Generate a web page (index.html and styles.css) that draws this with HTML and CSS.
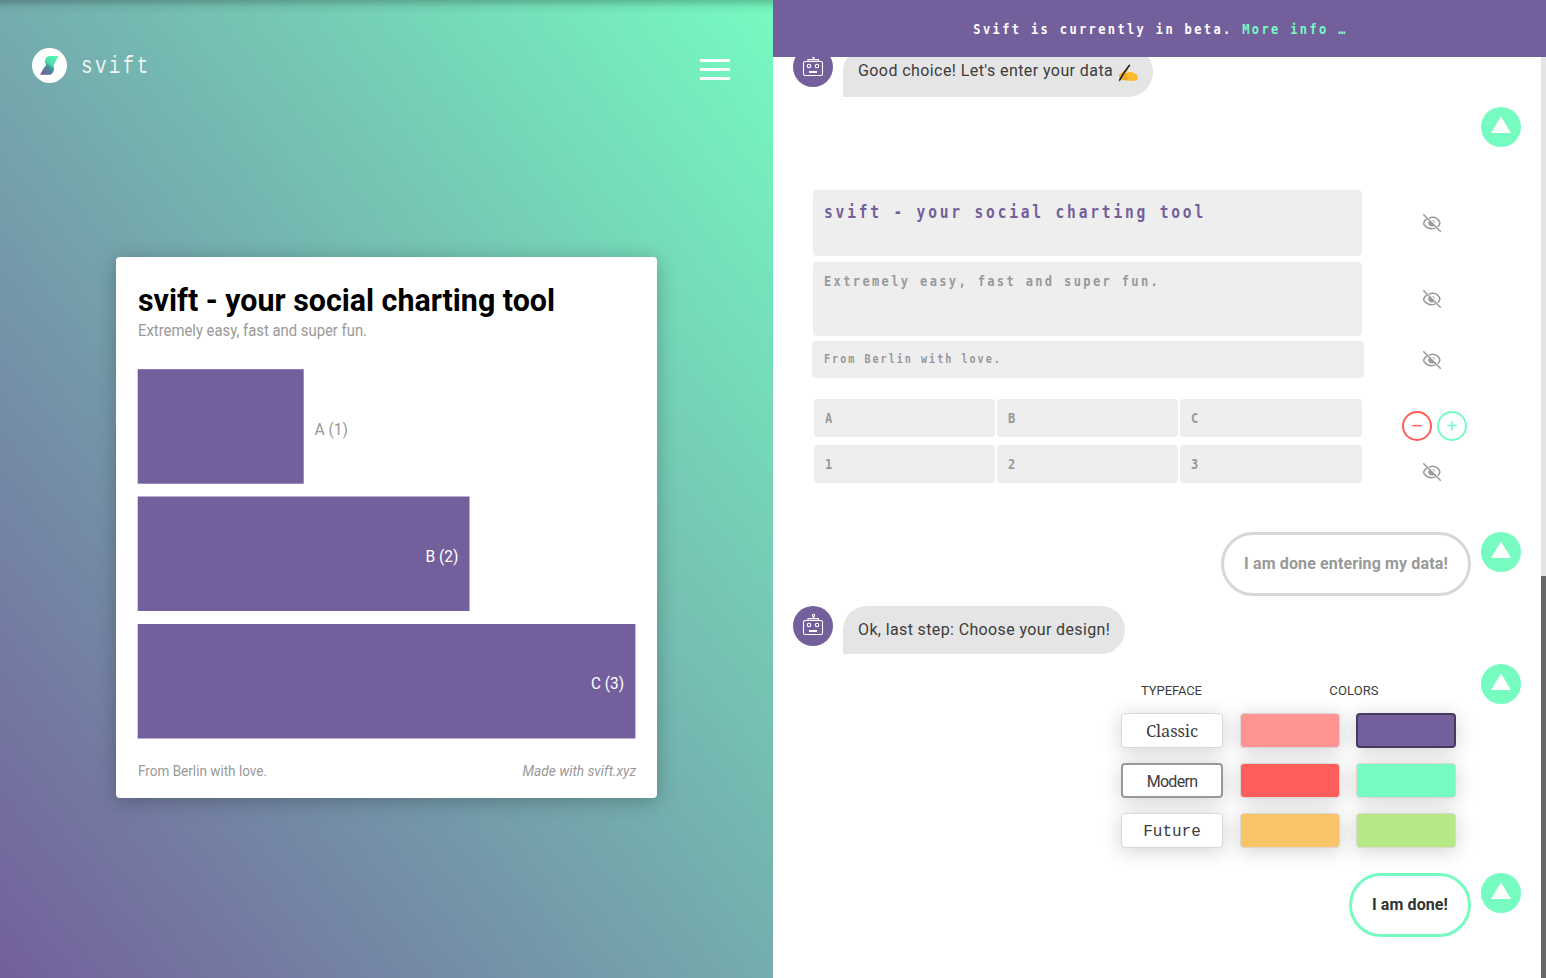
FILE: index.html
```html
<!DOCTYPE html>
<html lang="en">
<head>
<meta charset="utf-8">
<title>svift</title>
<link rel="stylesheet" href="styles.css">
</head>
<body>
<svg width="0" height="0" class="defs">
  <defs>
    <symbol id="hidden" viewBox="0 0 20 20">
      <g fill="none" stroke="#999" stroke-width="1.5" stroke-linecap="round">
        <path d="M1.700 1.700 18.300 18.300"/>
        <path d="M7.700 4.700C11 3.800 15 4.800 17.200 8c.9 1.300.9 2.600 0 4l-1 1.200M4.400 6.300C1.400 8.600 1 10.700 2.700 12.600c2.800 3.100 6.600 3.700 10.100 2.500"/>
      </g>
      <path d="M7.300 7.700a3.300 3.300 0 0 0 4.800 4.700z" fill="#999"/>
      <path d="M10.300 7.200q2.200.4 2.300 2.500" fill="none" stroke="#aaa"/>
    </symbol>
    <symbol id="robot" viewBox="0 0 40 40">
      <g fill="none" stroke="#fff" stroke-width="1.100">
        <rect x="10.500" y="14.500" width="19" height="14" rx="1.500"/>
        <path d="M15 14.300v-1.700h10.500v1.700M20.500 12.500v-2"/>
        <circle cx="20.500" cy="9.500" r="1.100"/>
        <circle cx="16" cy="19" r="1.700"/>
        <circle cx="24" cy="19" r="1.700"/>
      </g>
      <path d="M16 24h8v2h-8z" fill="#fff"/>
    </symbol>
    <linearGradient id="mark" x1=".8" y1="0" x2=".2" y2="1">
      <stop offset="0" stop-color="#55f5b0"/><stop offset=".42" stop-color="#50dcae"/>
      <stop offset=".55" stop-color="#44999b"/><stop offset="1" stop-color="#735f9b"/>
    </linearGradient>
  </defs>
</svg>
<div class="app">
  <section class="stage">
    <header class="header">
      <svg class="logo" width="120" height="35" viewBox="0 0 120 35">
        <circle cx="17.500" cy="17.500" r="17.500" fill="#fff"/>
        <path d="M26.500 8 22.800 15Q20.800 17 21.800 19Q23 24 18.500 26.800H8L12.200 19.200Q15.200 17.300 13.200 15Q12 9.500 17 8Z" fill="url(#mark)"/>
        <text transform="translate(49 24.500) scale(.8 1)" textLength="84" class="wordmark">svift</text>
      </svg>
      <div class="menu"><i></i><i></i><i></i></div>
    </header>
    <div class="card">
      <svg width="541" height="541" viewBox="0 0 541 541" class="chart">
        <text x="22" y="54" class="chart-title" textLength="417" lengthAdjust="spacingAndGlyphs">svift - your social charting tool</text>
        <text x="22" y="79" class="chart-sub" textLength="229" lengthAdjust="spacingAndGlyphs">Extremely easy, fast and super fun.</text>
        <g fill="#735f9b">
          <rect x="21.700" y="112.200" width="166" height="114.500"/>
          <rect x="21.700" y="239.500" width="331.800" height="114.500"/>
          <rect x="21.700" y="367" width="497.700" height="114.500"/>
        </g>
        <text x="198.500" y="178" class="chart-label" fill="#999" textLength="33.500" lengthAdjust="spacingAndGlyphs">A (1)</text>
        <text x="309.500" y="305" class="chart-label" fill="#fff" textLength="33" lengthAdjust="spacingAndGlyphs">B (2)</text>
        <text x="475" y="432" class="chart-label" fill="#fff" textLength="33" lengthAdjust="spacingAndGlyphs">C (3)</text>
        <text x="22" y="519" class="chart-foot" textLength="129" lengthAdjust="spacingAndGlyphs">From Berlin with love.</text>
        <text x="406.500" y="519" class="chart-foot credit" textLength="113.500" lengthAdjust="spacingAndGlyphs">Made with svift.xyz</text>
      </svg>
    </div>
  </section>
  <section class="panel">
    <div class="banner"><span class="narrow">Svift is currently in beta. <a>More info …</a></span></div>
    <div class="scroller">
      <main class="chat">
        <div class="bot first">
          <svg class="avatar"><use href="#robot"/></svg>
          <div class="bubble choice"><span>Good choice! Let's enter your data</span>
            <svg width="20" height="19" viewBox="0 0 20 19">
              <path d="M1 14Q0 11 3 10L8.500 6.500Q10.500 5.500 10 7.500L8.500 9.500 14 9l5.500 3v5q-6 1.500-11 .5-5 .3-7.500-3.500z" fill="#fdbc2c"/>
              <path d="M3 12.500 9 11M3.500 14.500 9 13.500M5 16.500 10 15.500" stroke="#d98a1b" stroke-width=".9"/>
              <path d="M2 16.500Q6 9 11.500 2.300" stroke="#222" stroke-width="1.700" fill="none" stroke-linecap="round"/>
              <path d="M1 18.300 2.600 15" stroke="#333"/>
            </svg>
          </div>
        </div>
        <div class="user form-row">
          <div class="form">
            <div class="line t"><div class="field title"><span class="narrow">svift - your social charting tool</span></div><svg class="eye"><use href="#hidden"/></svg></div>
            <div class="line s"><div class="field sub"><span class="narrow">Extremely easy, fast and super fun.</span></div><svg class="eye"><use href="#hidden"/></svg></div>
            <div class="line f"><div class="field foot"><span class="narrow">From Berlin with love.</span></div><svg class="eye"><use href="#hidden"/></svg></div>
            <div class="line cells"><div class="grid"><div class="field"><span class="narrow">A</span></div><div class="field"><span class="narrow">B</span></div><div class="field"><span class="narrow">C</span></div></div>
              <div class="buttons">
                <svg width="30" height="30"><circle cx="15" cy="15" r="14" fill="none" stroke="#ff5c5c" stroke-width="2"/><path d="M10.300 14.600h9.500" stroke="#ff5c5c" stroke-width="1.500"/></svg>
                <svg width="30" height="30"><circle cx="15" cy="15" r="14" fill="none" stroke="#76fbc1" stroke-width="2"/><path d="M10.300 14.600h9.500M15 10v9.500" stroke="#76fbc1" stroke-width="1.500"/></svg>
              </div></div>
            <div class="line cells"><div class="grid"><div class="field"><span class="narrow">1</span></div><div class="field"><span class="narrow">2</span></div><div class="field"><span class="narrow">3</span></div></div><svg class="eye low"><use href="#hidden"/></svg></div>
          </div>
          <svg class="up" viewBox="0 0 40 40"><path d="M20 9.500 30 26H10z"/></svg>
        </div>
        <div class="user">
          <div class="reply muted"><span>I am done entering my data!</span></div>
          <svg class="up" viewBox="0 0 40 40"><path d="M20 9.500 30 26H10z"/></svg>
        </div>
        <div class="bot">
          <svg class="avatar"><use href="#robot"/></svg>
          <div class="bubble last"><span>Ok, last step: Choose your design!</span></div>
        </div>
        <div class="user design-row">
          <div class="design">
            <div class="head"><span>TYPEFACE</span></div><div class="head wide"><span>COLORS</span></div>
            <div class="face classic"><span>Classic</span></div><div class="swatch pink"></div><div class="swatch purple"></div>
            <div class="face modern"><span>Modern</span></div><div class="swatch red"></div><div class="swatch mint"></div>
            <div class="face future"><span>Future</span></div><div class="swatch orange"></div><div class="swatch lime"></div>
          </div>
          <svg class="up" viewBox="0 0 40 40"><path d="M20 9.500 30 26H10z"/></svg>
        </div>
        <div class="user">
          <div class="reply done"><span>I am done!</span></div>
          <svg class="up" viewBox="0 0 40 40"><path d="M20 9.500 30 26H10z"/></svg>
        </div>
      </main>
      <div class="track"><div class="thumb"></div></div>
    </div>
  </section>
</div>
</body>
</html>
```
FILE: styles.css
```css
* { box-sizing: border-box; }
body { margin: 0; overflow: hidden; font-family: Roboto, sans-serif; color: #3c3c3c; }
svg { display: block; flex: none; }
.defs { position: absolute; }
.app { display: flex; width: 1546px; height: 978px; background: #fff; }
.stage { width: 773px; height: 978px; background: linear-gradient(rgba(0,0,0,.22), rgba(0,0,0,.05) 7px, transparent 14px), linear-gradient(to top right, #735f9b, #76fbc1); }
.header { height: 257px; padding: 48px 43px 0 32px; display: flex; justify-content: space-between; }
.wordmark { font: 24px "Liberation Mono", monospace; fill: #fff; fill-opacity: .88; }
.menu { display: flex; flex-direction: column; gap: 6px; padding-top: 11px; }
.menu i { width: 30px; height: 3px; background: #fff; }
.card { width: 541px; height: 541px; margin-left: 116px; background: #fff; border-radius: 4px; box-shadow: 0 3px 20px rgba(0,0,0,.25); }
.chart { font-family: Roboto, sans-serif; }
.chart-title { font-size: 32px; font-weight: 700; fill: #000; }
.chart-sub { font-size: 16px; fill: #999; }
.chart-label { font-size: 17px; }
.chart-foot { font-size: 14.5px; fill: #999; }
.credit { font-style: italic; }
.narrow { display: inline-block; transform: scaleX(.83); transform-origin: left center; }
.panel { width: 773px; display: flex; flex-direction: column; }
.banner { height: 57px; flex: none; background: #735f9b; color: #fff; display: flex; justify-content: center; align-items: center; font: bold 14.5px "DejaVu Sans Mono", monospace; letter-spacing: 2.84px; padding-left: 2px; white-space: pre; position: relative; z-index: 1; }
.banner .narrow { transform-origin: center; }
.banner a { color: #76fbc1; }
.scroller { height: 921px; display: flex; overflow: hidden; }
.chat { width: 768px; margin-top: -10px; padding: 0 20px; display: flex; flex-direction: column; gap: 10px; }
.track { width: 5px; background: #e4e4e4; padding-top: 519px; }
.thumb { height: 402px; background: #686868; }
.bot { display: flex; gap: 10px; height: 48px; flex: none; }
.bot.first { height: 50px; }
.avatar { width: 40px; height: 40px; border-radius: 50%; background: #735f9b; }
.bubble { background: #e5e5e5; border-radius: 25px 25px 25px 0; display: flex; align-items: center; gap: 5px; padding: 0 0 2px 15px; font-size: 16px; white-space: nowrap; }
.choice { width: 310px; padding-bottom: 4px; letter-spacing: .42px; }
.choice svg { margin-top: 4px; }
.last { width: 282px; letter-spacing: .37px; }
.user { display: flex; justify-content: flex-end; gap: 10px; height: 64px; flex: none; }
.up { width: 40px; height: 40px; border-radius: 50%; background: #76fbc1; fill: #fff; }
.form-row { height: 415px; }
.form { width: 659px; padding-top: 83px; }
.line { display: flex; justify-content: space-between; width: 630px; }
.field { background: #eee; border-radius: 4px; font: bold 14.5px/18px "DejaVu Sans Mono", monospace; letter-spacing: 2.84px; color: #999; padding: 10px 11px; white-space: nowrap; }
.t, .s { padding-left: 1px; }
.title { width: 549px; height: 66px; font-size: 17.5px; line-height: 22px; letter-spacing: 3.41px; color: #735f9b; padding: 11px; }
.sub { width: 549px; height: 74px; }
.foot { width: 552px; height: 37px; font-size: 12.2px; letter-spacing: 2.4px; padding: 9px 12px; }
.s { margin-top: 6px; }
.f { margin-top: 5px; margin-bottom: 21px; }
.cells { height: 38px; margin-bottom: 8px; padding-left: 2px; }
.grid { display: grid; grid-template-columns: 181px 181px 182px; gap: 2px; }
.eye { width: 20px; height: 20px; align-self: center; }
.cells .low { margin-top: 17px; align-self: flex-start; }
.buttons { display: flex; gap: 5px; padding-top: 12px; margin-right: -25px; }
.reply { border: 3px solid #d7d7d7; border-radius: 32px; height: 64px; padding-bottom: 2px; display: flex; align-items: center; justify-content: center; font-size: 16px; font-weight: 700; white-space: nowrap; }
.muted { width: 250px; color: #999; letter-spacing: .13px; }
.done { width: 122px; border-color: #76fbc1; color: #333; letter-spacing: .1px; }
.design-row { height: 199px; }
.design { width: 350px; display: grid; grid-template-columns: 103px 100px 100px; grid-template-rows: 34px 35px 35px 35px; gap: 15px 16px; align-content: start; }
.head { padding: 18px 2px 0 0; text-align: center; font-size: 13px; line-height: 17px; letter-spacing: -.1px; }
.head.wide { grid-column: 2 / 4; padding: 18px 0 0 12px; letter-spacing: .1px; }
.face { width: 102px; background: #fff; border: 1px solid #d8d8d8; border-radius: 4px; display: flex; align-items: center; justify-content: center; box-shadow: 0 3px 20px rgba(0,0,0,.18); }
.swatch { border: 1px solid #dcd6d4; border-radius: 4px; box-shadow: 0 3px 20px rgba(0,0,0,.18); }
.classic { font-family: "Noto Serif", "DejaVu Serif", serif; font-size: 16.5px; letter-spacing: -.1px; }
.modern { border: 2px solid #999; font-size: 16px; letter-spacing: -.7px; padding-top: 1px; }
.future { font-family: "Liberation Mono", monospace; font-size: 16px; padding-top: 2px; }
.pink { background: #fe9592; }
.purple { background: #735f9b; border: 2px solid #463a60; }
.red { background: #ff5c5c; }
.mint { background: #76fbc1; }
.orange { background: #fac569; }
.lime { background: #b6e985; }
```
